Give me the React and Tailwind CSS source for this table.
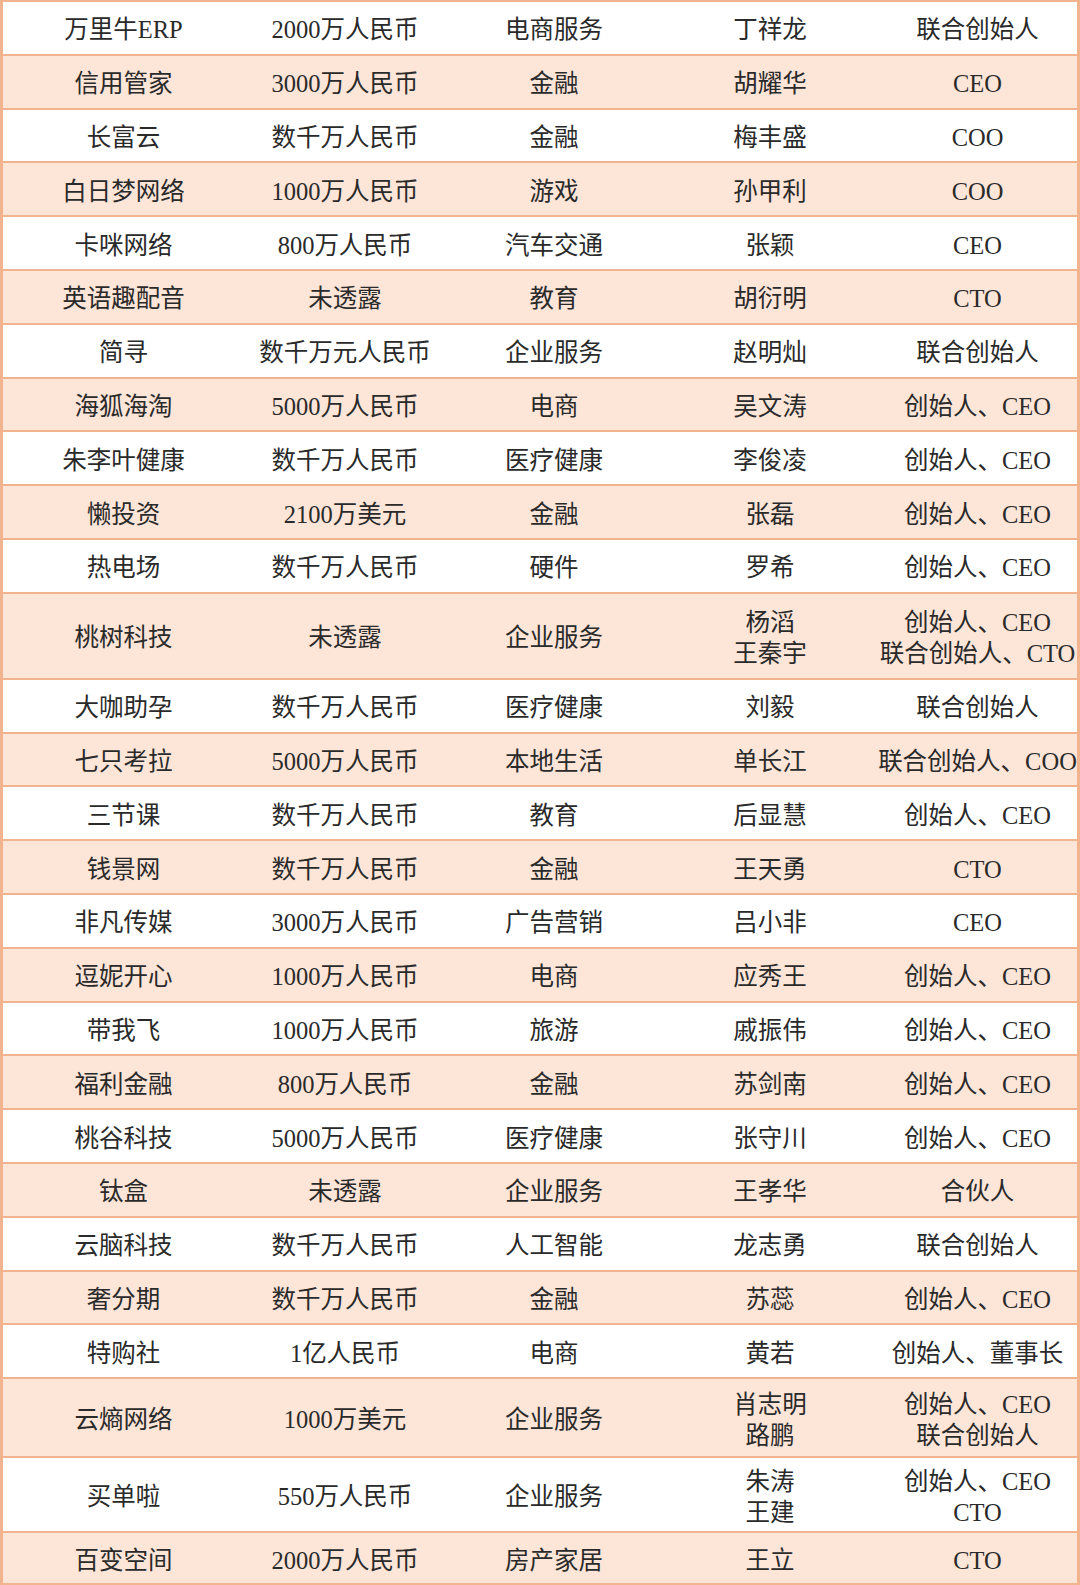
const rows = [
  ["万里牛ERP", "2000万人民币", "电商服务", ["丁祥龙"], ["联合创始人"]],
  ["信用管家", "3000万人民币", "金融", ["胡耀华"], ["CEO"]],
  ["长富云", "数千万人民币", "金融", ["梅丰盛"], ["COO"]],
  ["白日梦网络", "1000万人民币", "游戏", ["孙甲利"], ["COO"]],
  ["卡咪网络", "800万人民币", "汽车交通", ["张颖"], ["CEO"]],
  ["英语趣配音", "未透露", "教育", ["胡衍明"], ["CTO"]],
  ["简寻", "数千万元人民币", "企业服务", ["赵明灿"], ["联合创始人"]],
  ["海狐海淘", "5000万人民币", "电商", ["吴文涛"], ["创始人、CEO"]],
  ["朱李叶健康", "数千万人民币", "医疗健康", ["李俊凌"], ["创始人、CEO"]],
  ["懒投资", "2100万美元", "金融", ["张磊"], ["创始人、CEO"]],
  ["热电场", "数千万人民币", "硬件", ["罗希"], ["创始人、CEO"]],
  ["桃树科技", "未透露", "企业服务", ["杨滔", "王秦宇"], ["创始人、CEO", "联合创始人、CTO"], "h-[86px]"],
  ["大咖助孕", "数千万人民币", "医疗健康", ["刘毅"], ["联合创始人"]],
  ["七只考拉", "5000万人民币", "本地生活", ["单长江"], ["联合创始人、COO"]],
  ["三节课", "数千万人民币", "教育", ["后显慧"], ["创始人、CEO"]],
  ["钱景网", "数千万人民币", "金融", ["王天勇"], ["CTO"]],
  ["非凡传媒", "3000万人民币", "广告营销", ["吕小非"], ["CEO"]],
  ["逗妮开心", "1000万人民币", "电商", ["应秀王"], ["创始人、CEO"]],
  ["带我飞", "1000万人民币", "旅游", ["戚振伟"], ["创始人、CEO"]],
  ["福利金融", "800万人民币", "金融", ["苏剑南"], ["创始人、CEO"]],
  ["桃谷科技", "5000万人民币", "医疗健康", ["张守川"], ["创始人、CEO"]],
  ["钛盒", "未透露", "企业服务", ["王孝华"], ["合伙人"]],
  ["云脑科技", "数千万人民币", "人工智能", ["龙志勇"], ["联合创始人"]],
  ["奢分期", "数千万人民币", "金融", ["苏蕊"], ["创始人、CEO"]],
  ["特购社", "1亿人民币", "电商", ["黄若"], ["创始人、董事长"]],
  ["云熵网络", "1000万美元", "企业服务", ["肖志明", "路鹏"], ["创始人、CEO", "联合创始人"], "h-[79px]"],
  ["买单啦", "550万人民币", "企业服务", ["朱涛", "王建"], ["创始人、CEO", "CTO"], "h-[75px]"],
  ["百变空间", "2000万人民币", "房产家居", ["王立"], ["CTO"], "h-[52px]"],
];

function Cell({ children }) {
  return (
    <div className="flex flex-col items-center justify-center text-center leading-[31px] whitespace-nowrap pt-[4px]">
      {children}
    </div>
  );
}

export default function App() {
  return (
    <div
      className="w-[1080px] h-[1585px] bg-white text-[24.5px] text-[#2a2a2a] border-l-[3px] border-r-[3px] border-t-2 border-[#f2b48e] flex flex-col"
      style={{ fontFamily: '"Liberation Serif", "Noto Sans CJK SC", serif' }}
    >
      {rows.map((r, i) => (
        <div
          key={i}
          className={`grid grid-cols-[241px_202px_216px_216px_1fr] border-b-2 border-[#f2b48e] ${
            i % 2 === 1 ? "bg-[#fde5d8]" : "bg-white"
          } ${r[5] ? r[5] : "h-[53.8px]"}`}
        >
          <Cell>{r[0]}</Cell>
          <Cell>{r[1]}</Cell>
          <Cell>{r[2]}</Cell>
          <Cell>
            {r[3].map((t, j) => (
              <div key={j}>{t}</div>
            ))}
          </Cell>
          <Cell>
            {r[4].map((t, j) => (
              <div key={j}>{t}</div>
            ))}
          </Cell>
        </div>
      ))}
    </div>
  );
}
